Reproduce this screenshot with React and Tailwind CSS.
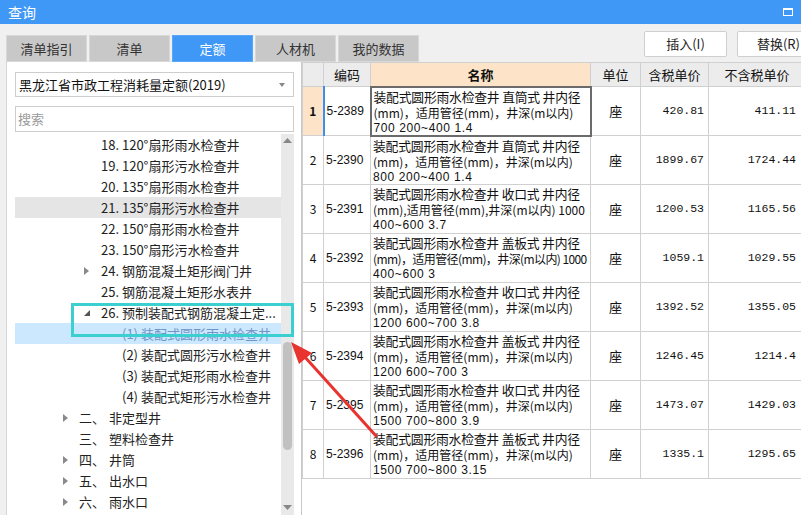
import React from 'react'

const tree = [
  { lv: 'b', text: '18. 120°扇形雨水检查井' },
  { lv: 'b', text: '19. 120°扇形污水检查井' },
  { lv: 'b', text: '20. 135°扇形雨水检查井' },
  { lv: 'b', text: '21. 135°扇形污水检查井', hover: true },
  { lv: 'b', text: '22. 150°扇形雨水检查井' },
  { lv: 'b', text: '23. 150°扇形污水检查井' },
  { lv: 'b', text: '24. 钢筋混凝土矩形阀门井', arrow: 'right' },
  { lv: 'b', text: '25. 钢筋混凝土矩形水表井' },
  { lv: 'b', text: '26. 预制装配式钢筋混凝土定...', arrow: 'down' },
  { lv: 'c', text: '(1) 装配式圆形雨水检查井', selected: true },
  { lv: 'c', text: '(2) 装配式圆形污水检查井' },
  { lv: 'c', text: '(3) 装配式矩形雨水检查井' },
  { lv: 'c', text: '(4) 装配式矩形污水检查井' },
  { lv: 'a', num: '二、', text: '非定型井', arrow: 'right' },
  { lv: 'a', num: '三、', text: '塑料检查井' },
  { lv: 'a', num: '四、', text: '井筒', arrow: 'right' },
  { lv: 'a', num: '五、', text: '出水口', arrow: 'right' },
  { lv: 'a', num: '六、', text: '雨水口', arrow: 'right' },
]

const rows = [
  { code: '5-2389', l1: '装配式圆形雨水检查井 直筒式 井内径', l2: '(mm)，适用管径(mm)，井深(m以内)', l3: '700 200~400 1.4', p1: '420.81', p2: '411.11' },
  { code: '5-2390', l1: '装配式圆形雨水检查井 直筒式 井内径', l2: '(mm)，适用管径(mm)，井深(m以内)', l3: '800 200~400 1.4', p1: '1899.67', p2: '1724.44' },
  { code: '5-2391', l1: '装配式圆形雨水检查井 收口式 井内径', l2: '(mm),适用管径(mm),井深(m以内) 1000', l3: '400~600 3.7', p1: '1200.53', p2: '1165.56' },
  { code: '5-2392', l1: '装配式圆形雨水检查井 盖板式 井内径', l2: '(mm)，适用管径(mm)，井深(m以内) 1000', l3: '400~600 3', p1: '1059.1', p2: '1029.55', tight: true },
  { code: '5-2393', l1: '装配式圆形雨水检查井 收口式 井内径', l2: '(mm)，适用管径(mm)，井深(m以内)', l3: '1200 600~700 3.8', p1: '1392.52', p2: '1355.05' },
  { code: '5-2394', l1: '装配式圆形雨水检查井 盖板式 井内径', l2: '(mm)，适用管径(mm)，井深(m以内)', l3: '1200 600~700 3', p1: '1246.45', p2: '1214.4' },
  { code: '5-2395', l1: '装配式圆形雨水检查井 收口式 井内径', l2: '(mm)，适用管径(mm)，井深(m以内)', l3: '1500 700~800 3.9', p1: '1473.07', p2: '1429.03' },
  { code: '5-2396', l1: '装配式圆形雨水检查井 盖板式 井内径', l2: '(mm)，适用管径(mm)，井深(m以内)', l3: '1500 700~800 3.15', p1: '1335.1', p2: '1295.65' },
]

const tabs = ['清单指引', '清单', '定额', '人材机', '我的数据']

const Arrow = ({ dir }) => {
  if (dir === 'right')
    return (
      <svg width="5" height="8" viewBox="0 0 5 8">
        <path d="M0 0 L5 4 L0 8 Z" fill="#8a8a8a" />
      </svg>
    )
  if (dir === 'down')
    return (
      <svg width="6" height="6" viewBox="0 0 6 6">
        <path d="M6 0 L6 6 L0 6 Z" fill="#555" />
      </svg>
    )
  return null
}

const TreeRow = ({ item }) => {
  const bg = item.selected ? 'bg-[#cce8ff]' : item.hover ? 'bg-[#e5e5e5]' : ''
  const color = item.selected ? 'text-[#6f95c8]' : 'text-[#222]'
  if (item.lv === 'a')
    return (
      <div className={`flex items-center h-[21px] pl-[48px] ${bg} ${color}`}>
        <span className="w-[16px] flex items-center">{item.arrow && <Arrow dir={item.arrow} />}</span>
        <span className="w-[30px]">{item.num}</span>
        <span>{item.text}</span>
      </div>
    )
  if (item.lv === 'b')
    return (
      <div className={`flex items-center h-[21px] pl-[69px] ${bg} ${color}`}>
        <span className="w-[17px] flex items-center">{item.arrow && <Arrow dir={item.arrow} />}</span>
        <span className="whitespace-nowrap">{item.text}</span>
      </div>
    )
  return (
    <div className={`flex items-center h-[21px] pl-[107px] ${bg} ${color}`}>
      <span className="whitespace-nowrap">{item.text}</span>
    </div>
  )
}

export default function App() {
  return (
    <div
      className="relative w-[801px] h-[515px] overflow-hidden bg-[#f0f0f0] text-[13px]"
      style={{ fontFamily: '"Noto Sans CJK SC", "Liberation Sans", sans-serif' }}
    >
      {/* Title bar */}
      <div className="h-[24px] bg-[#3f97f6] flex items-center justify-between px-2 text-white text-[14px]">
        <span>查询</span>
        <div className="w-[10px] h-[8px] border border-white border-t-2" />
      </div>

      {/* Tabs + buttons */}
      <div className="h-[38px] flex items-end justify-between pl-[6px]">
        <div className="flex gap-[2px]">
          {tabs.map((t) =>
            t === '定额' ? (
              <div key={t} className="w-[81px] h-[27px] flex items-center justify-center bg-[#3f97f6] text-white border border-[#5aa6f7]">
                {t}
              </div>
            ) : (
              <div key={t} className="w-[81px] h-[27px] flex items-center justify-center bg-[#c8c8c8] text-[#333] border border-[#d8d8d8]">
                {t}
              </div>
            )
          )}
        </div>
        <div className="flex gap-[10px] self-start mt-[7px] -mr-[19px]">
          <button className="w-[83px] h-[26px] bg-white border border-[#cfcfcf] rounded-[2px] text-[#222]">插入(I)</button>
          <button className="w-[83px] h-[26px] bg-white border border-[#cfcfcf] rounded-[2px] text-[#222]">替换(R)</button>
        </div>
      </div>

      {/* Main */}
      <div className="flex h-[453px] pl-[6px]">
        {/* Left panel */}
        <div className="w-[295px] bg-white border-l border-[#d6d6d6] pl-[8px] pr-[7px] flex flex-col">
          <div className="mt-[10px] h-[25px] border border-[#cdcdcd] flex items-center justify-between pl-[3px] pr-[8px] text-[#111]">
            <span>黑龙江省市政工程消耗量定额(2019)</span>
            <svg width="6" height="4" viewBox="0 0 6 4">
              <path d="M0 0 L6 0 L3 4 Z" fill="#888" />
            </svg>
          </div>
          <div className="mt-[9px] h-[26px] border border-[#cdcdcd] flex items-center pl-[2px] text-[#9a9a9a]">搜索</div>
          <div className="mt-[2px] flex flex-1">
            <div className="flex-1">
              {tree.map((it, i) => (
                <TreeRow key={i} item={it} />
              ))}
            </div>
            <div className="w-[13px] bg-[#e9e9e9] flex flex-col items-center">
              <svg width="9" height="5" viewBox="0 0 9 5" className="mt-[4px]">
                <path d="M0 5 L4.5 0 L9 5 Z" fill="#888" />
              </svg>
              <div className="mt-[199px] w-[9px] h-[108px] rounded-full bg-[#c1c1c1]" />
              <svg width="9" height="5" viewBox="0 0 9 5" className="mt-auto mb-[5px]">
                <path d="M0 0 L4.5 5 L9 0 Z" fill="#888" />
              </svg>
            </div>
          </div>
        </div>

        {/* Table */}
        <div className="flex-1 bg-white border-l border-[#c8c8c8] overflow-hidden">
          <table className="table-fixed border-collapse w-[503px] text-[#111]">
            <colgroup>
              <col className="w-[21px]" />
              <col className="w-[47px]" />
              <col className="w-[220px]" />
              <col className="w-[50px]" />
              <col className="w-[68px]" />
              <col className="w-[97px]" />
            </colgroup>
            <thead>
              <tr className="h-[24px] bg-[#ececec]">
                <th className="border border-[#d0d0d0] font-normal"></th>
                <th className="border border-[#d0d0d0] font-normal">编码</th>
                <th className="border border-[#d0d0d0] font-bold bg-[#fde4c8]">名称</th>
                <th className="border border-[#d0d0d0] font-normal">单位</th>
                <th className="border border-[#d0d0d0] font-normal">含税单价</th>
                <th className="border border-[#d0d0d0] font-normal">不含税单价</th>
              </tr>
            </thead>
            <tbody>
              {rows.map((r, i) => {
                const sel = i === 0
                return (
                  <tr key={r.code} className="h-[49px]">
                    <td className={`border border-[#d0d0d0] text-center text-[12px] ${sel ? 'bg-[#fde4c8] font-bold' : ''}`}>{i + 1}</td>
                    <td
                      className={`border border-[#d0d0d0] pl-[2px] text-[12px] ${sel ? 'border-l-2 border-l-[#3b8ff0]' : ''}`}
                      style={{ fontFamily: '"Liberation Sans", sans-serif' }}
                    >
                      {r.code}
                    </td>
                    <td className={`pl-[2px] align-top pt-[1px] ${sel ? 'border-2 border-[#6b6b6b]' : 'border border-[#d0d0d0]'}`}>
                      <div className="text-[12.8px] leading-[16px] tracking-[-0.2px] whitespace-nowrap">{r.l1}</div>
                      <div className={`text-[12px] leading-[16px] whitespace-nowrap ${r.tight ? 'tracking-[-0.6px]' : ''}`}>{r.l2}</div>
                      <div className="text-[12px] leading-[14px] whitespace-nowrap tracking-[0.6px]" style={{ fontFamily: '"Liberation Sans", sans-serif' }}>
                        {r.l3}
                      </div>
                    </td>
                    <td className="border border-[#d0d0d0] text-center text-[13px]">座</td>
                    <td className="border border-[#d0d0d0] text-right pr-[4px] text-[11.5px]" style={{ fontFamily: '"Liberation Mono", monospace' }}>
                      {r.p1}
                    </td>
                    <td className="border border-[#d0d0d0] text-right pr-[9px] text-[11.5px]" style={{ fontFamily: '"Liberation Mono", monospace' }}>
                      {r.p2}
                    </td>
                  </tr>
                )
              })}
            </tbody>
          </table>
        </div>
      </div>

      {/* Annotation: highlight box */}
      <div className="absolute left-[71px] top-[303px] w-[223px] h-[34px] border-[3px] border-[#3ccfd0] pointer-events-none" />

      {/* Annotation: red arrow */}
      <svg className="absolute left-0 top-0 pointer-events-none" width="801" height="515">
        <line x1="304" y1="356" x2="377" y2="437" stroke="#e8332f" strokeWidth="3" />
        <polygon points="291,342 299,364 312,353" fill="#e8332f" />
      </svg>
    </div>
  )
}
